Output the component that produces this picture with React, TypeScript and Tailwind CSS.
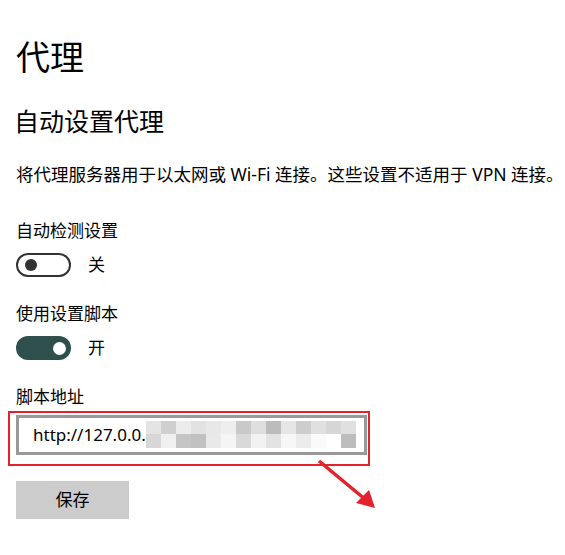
import React from "react";

const blur1 = ["#e4e4e4", "#cfcfcf", "#ececec", "#e2e2e2", "#e8e8e8", "#eeeeee", "#c9c9c9", "#dedede", "#bcbcbc", "#e6e6e6", "#cdcdcd", "#e0e0e0", "#d6d6d6", "#e0e0e0"];
const blur2 = ["#d7d7d7", "#f0f0f0", "#c5c5c5", "#c1c1c1", "#e9e9e9", "#f5f5f5", "#d9d9d9", "#f2f2f2", "#e3e3e3", "#f7f7f7", "#ececec", "#fafafa", "#ffffff", "#bdbdbd"];

function Toggle({ on }: { on: boolean }) {
  return on ? (
    <div className="w-[55px] h-[24px] rounded-full bg-[#2f4f4d] flex items-center justify-end pr-[5px]">
      <div className="w-[13px] h-[13px] rounded-full bg-white" />
    </div>
  ) : (
    <div className="w-[55px] h-[24px] rounded-full border-2 border-[#333] flex items-center pl-[7px]">
      <div className="w-[12px] h-[12px] rounded-full bg-[#333]" />
    </div>
  );
}

export default function App() {
  return (
    <div
      className="relative w-[565px] h-[555px] bg-white text-black overflow-hidden"
      style={{ fontFamily: '"Noto Sans", "Noto Sans CJK SC", sans-serif' }}
    >
      <div className="flex flex-col items-start pl-4 pt-[37px]">
        <h1 className="text-[34px] leading-[40px]">代理</h1>
        <h2 className="text-[25px] leading-[32px] mt-[28px] -ml-[2px]">自动设置代理</h2>
        <p className="text-[17.5px] leading-[24px] mt-[25px] whitespace-nowrap">
          将代理服务器用于以太网或 Wi-Fi 连接。这些设置不适用于 VPN 连接。
        </p>

        <div className="text-[17px] leading-[24px] mt-[33px]">自动检测设置</div>
        <div className="flex items-center gap-[17px] mt-[10px]">
          <Toggle on={false} />
          <span className="text-[17px] leading-[24px]">关</span>
        </div>

        <div className="text-[17px] leading-[24px] mt-[25px]">使用设置脚本</div>
        <div className="flex items-center gap-[17px] mt-[10px]">
          <Toggle on={true} />
          <span className="text-[17px] leading-[24px]">开</span>
        </div>

        <div className="text-[17px] leading-[24px] mt-[25px]">脚本地址</div>
        <div className="-ml-2 mt-[2px] w-[362px] h-[55px] border-2 border-[#e5212b] pt-[2px] pl-[6px]">
          <div className="relative w-[351px] h-[40px] border-[3px] border-[#999] flex items-center pl-[14px]">
            <span className="text-[17px]">http://127.0.0.1</span>
            <div className="absolute left-[127px] top-[3px] flex flex-col">
              <div className="flex">
                {blur1.map((c, i) => (
                  <div key={i} className="w-[15px] h-[13px]" style={{ background: c }} />
                ))}
              </div>
              <div className="flex">
                {blur2.map((c, i) => (
                  <div key={i} className="w-[15px] h-[14px]" style={{ background: c }} />
                ))}
              </div>
            </div>
          </div>
        </div>

        <button className="mt-[15px] w-[113px] h-[38px] bg-[#cccccc] text-[17px]">保存</button>
      </div>

      <svg className="absolute left-0 top-0 pointer-events-none" width="565" height="555">
        <line x1="319" y1="461" x2="366" y2="500" stroke="#e5212b" strokeWidth="3.5" />
        <polygon points="375,508 356,503 369,490" fill="#e5212b" />
      </svg>
    </div>
  );
}
